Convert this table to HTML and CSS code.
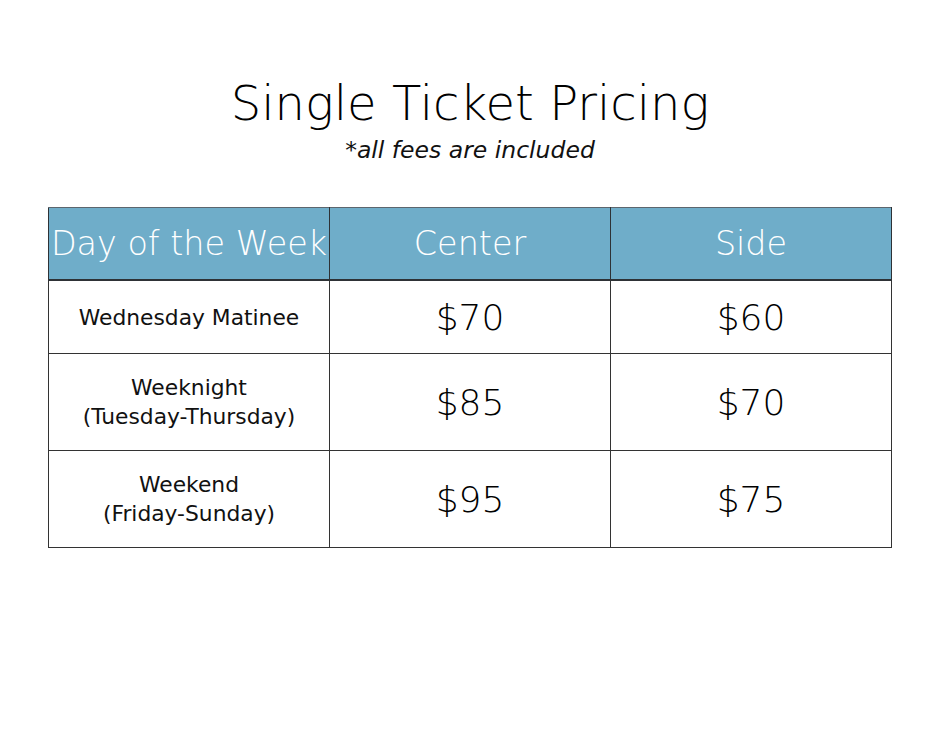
FILE: index.html
```html
<!DOCTYPE html>
<html>
<head>
<meta charset="utf-8">
<link rel="stylesheet" href="styles.css">
</head>
<body>
<div class="page">
  <h1 class="title">Single Ticket Pricing</h1>
  <p class="subtitle">*all fees are included</p>
  <table class="pricing">
    <thead>
      <tr>
        <th>Day of the Week</th>
        <th>Center</th>
        <th>Side</th>
      </tr>
    </thead>
    <tbody>
      <tr class="row-short">
        <td class="label">Wednesday Matinee</td>
        <td class="price">$70</td>
        <td class="price">$60</td>
      </tr>
      <tr class="row-tall">
        <td class="label">Weeknight<br>(Tuesday-Thursday)</td>
        <td class="price">$85</td>
        <td class="price">$70</td>
      </tr>
      <tr class="row-tall">
        <td class="label">Weekend<br>(Friday-Sunday)</td>
        <td class="price">$95</td>
        <td class="price">$75</td>
      </tr>
    </tbody>
  </table>
</div>
</body>
</html>
```

FILE: styles.css
```css
html, body {
  margin: 0;
  padding: 0;
  background: #ffffff;
}
body {
  font-family: "DejaVu Sans", "Liberation Sans", sans-serif;
  color: #000;
}
.page {
  width: 940px;
  height: 747px;
  padding-top: 75px;
  box-sizing: border-box;
}
.title {
  margin: 0;
  text-align: center;
  font-weight: 200;
  font-size: 48px;
  line-height: 56px;
}
.subtitle {
  margin: 5px 0 0 0;
  text-align: center;
  font-style: italic;
  font-weight: 400;
  font-size: 23.5px;
  line-height: 28px;
  color: #111;
}
.pricing {
  margin: 43px 0 0 48px;
  border-collapse: collapse;
  width: 844px;
  table-layout: fixed;
}
.pricing th {
  background: #6fadc9;
  color: #ffffff;
  font-weight: 200;
  font-size: 33.4px;
  height: 71px;
  padding: 0;
  border-left: 1px solid #2e3236;
  border-right: 1px solid #2e3236;
  border-top: 1px solid #5c666e;
  border-bottom: 2px solid #2e3236;
  white-space: nowrap;
}
.pricing td {
  border: 1px solid #333;
  text-align: center;
  padding: 0;
}
.row-short td { height: 72px; }
.row-tall td { height: 96px; }
.label {
  font-size: 21.8px;
  line-height: 29px;
  color: #111;
}
.price {
  font-size: 36px;
  font-weight: 200;
}
```
